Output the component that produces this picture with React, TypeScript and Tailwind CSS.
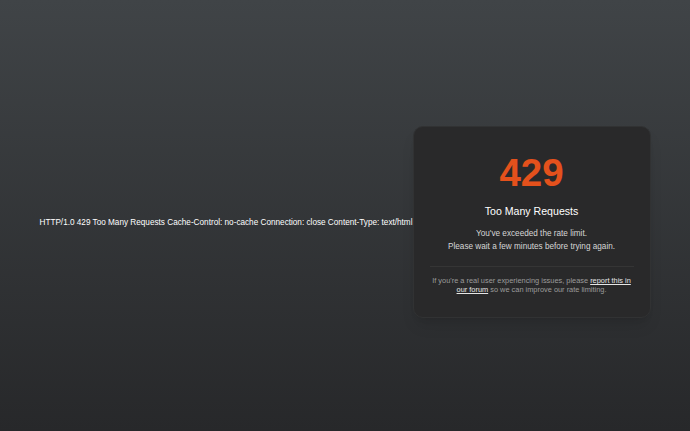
import React from 'react';

export default function App() {
  return (
    <div
      className="flex h-[431px] w-full items-center justify-center bg-gradient-to-b from-[#404447] to-[#27282a] pt-[13px] text-white"
      style={{ fontFamily: '"Liberation Sans", Arial, sans-serif' }}
    >
      <p className="mt-[3px] shrink-0 whitespace-nowrap text-[8.2px] leading-none text-white">
        HTTP/1.0 429 Too Many Requests Cache-Control: no-cache Connection: close Content-Type: text/html
      </p>
      <div className="w-[238px] shrink-0 rounded-[10px] border border-[#313233] bg-[#29292a] px-4 pt-[27px] pb-[23px] text-center shadow-lg">
        <h1 className="text-[38.5px] font-bold leading-none text-[#e4511c]">429</h1>
        <h2 className="mt-[13.5px] text-[10.6px] leading-none text-white">Too Many Requests</h2>
        <p className="mt-[11px] text-[8.2px] leading-[13px] text-[#d6d6d6]">
          You've exceeded the rate limit.
          <br />
          Please wait a few minutes before trying again.
        </p>
        <hr className="mx-0 mt-[13px] border-t border-[#353535]" />
        <p className="mt-[9.3px] text-[7.4px] leading-[9px] text-[#9c9c9c]">
          If you're a real user experiencing issues, please{' '}
          <a href="#" className="text-[#e6e6e6] underline">
            report this in our forum
          </a>{' '}
          so we can improve our rate limiting.
        </p>
      </div>
    </div>
  );
}
